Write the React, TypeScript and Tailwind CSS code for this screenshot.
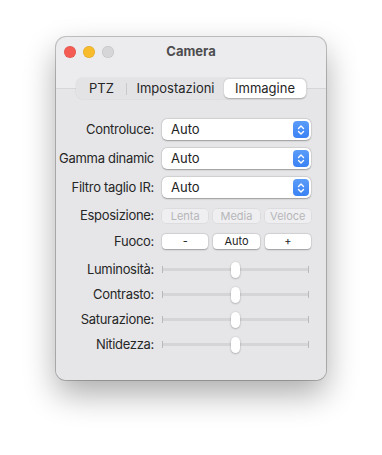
import React from "react";

const font = { fontFamily: "Inter, 'Liberation Sans', sans-serif" };

function Stepper() {
  return (
    <div className="w-[16px] h-[17px] rounded-[4px] bg-gradient-to-b from-[#5a9cf8] to-[#3a82f5] flex items-center justify-center">
      <svg width="8" height="12" viewBox="0 0 8 12" fill="none" stroke="white" strokeWidth="1.4" strokeLinecap="round" strokeLinejoin="round">
        <path d="M1.5 4.5 L4 2 L6.5 4.5" />
        <path d="M1.5 7.5 L4 10 L6.5 7.5" />
      </svg>
    </div>
  );
}

function Select({ value }: { value: string }) {
  return (
    <div className="h-[21px] w-full bg-white rounded-[5px] shadow-[0_0.5px_1.5px_rgba(0,0,0,0.3),0_0_0_0.5px_rgba(0,0,0,0.08)] flex items-center justify-between pl-[9px] pr-[2px]">
      <span className="text-[13px] text-[#222]">{value}</span>
      <Stepper />
    </div>
  );
}

function Row({ label, h, children, extra = "" }: { label: string; h: string; children: React.ReactNode; extra?: string }) {
  return (
    <div className={`flex items-center ${h} ${extra}`}>
      <div className="w-[98px] shrink-0 text-right text-[13px] tracking-[-0.3px] text-[#262626] whitespace-nowrap">{label}</div>
      <div className="ml-[8px] flex-1 flex items-center">{children}</div>
    </div>
  );
}

function Slider() {
  return (
    <div className="relative w-[147px] h-[18px] flex items-center">
      <div className="absolute left-0 right-0 h-[3px] bg-[#d5d5d8] rounded-full" />
      <div className="absolute left-0 w-[1px] h-[7px] bg-[#b9b9bc]" />
      <div className="absolute right-0 w-[1px] h-[7px] bg-[#b9b9bc]" />
      <div className="absolute left-[69px] w-[9px] h-[16px] bg-white rounded-full shadow-[0_0.5px_2px_rgba(0,0,0,0.35)]" />
    </div>
  );
}

function SmallBtn({ label, disabled }: { label: string; disabled?: boolean }) {
  return disabled ? (
    <div className="flex-1 h-[14px] rounded-[4px] bg-[#efeff1] shadow-[0_0_0_0.5px_rgba(0,0,0,0.07)] flex items-center justify-center text-[11px] text-[#b6b6b9]">
      {label}
    </div>
  ) : (
    <div className="flex-1 h-[15px] rounded-[4px] bg-white shadow-[0_0.5px_1.5px_rgba(0,0,0,0.3),0_0_0_0.5px_rgba(0,0,0,0.06)] flex items-center justify-center text-[11px] text-[#222]">
      {label}
    </div>
  );
}

export default function App() {
  return (
    <div className="w-[382px] h-[455px] bg-white pt-[37px] pl-[56px]" style={font}>
      <div className="w-[270px] h-[343px] rounded-[10px] bg-[#ececee] shadow-[0_14px_32px_rgba(0,0,0,0.33),0_0_0_1px_rgba(0,0,0,0.22)] overflow-hidden flex flex-col">
        {/* title bar */}
        <div className="relative h-[30px] flex items-center px-[8px] shrink-0">
          <div className="flex gap-[7px]">
            <div className="w-[12px] h-[12px] rounded-full bg-[#f45c53] shadow-[inset_0_0_0_0.5px_rgba(0,0,0,0.12)]" />
            <div className="w-[12px] h-[12px] rounded-full bg-[#f8bb2c] shadow-[inset_0_0_0_0.5px_rgba(0,0,0,0.12)]" />
            <div className="w-[12px] h-[12px] rounded-full bg-[#d6d6d8] shadow-[inset_0_0_0_0.5px_rgba(0,0,0,0.12)]" />
          </div>
          <div className="absolute inset-0 flex items-center justify-center pointer-events-none">
            <span className="text-[13px] font-bold text-[#4d4d4f]">Camera</span>
          </div>
        </div>
        {/* segmented control */}
        <div className="relative z-10 mt-[11px] ml-[20px] w-[231px] h-[21px] rounded-[6px] bg-[#e3e3e6] shadow-[0_0_0_0.5px_rgba(0,0,0,0.06)] flex items-center p-[1px] text-[13px] text-[#262626]">
          <div className="w-[49px] text-center">PTZ</div>
          <div className="w-[1px] h-[12px] bg-[#c9c9cc]" />
          <div className="w-[97px] text-center">Impostazioni</div>
          <div className="ml-auto w-[82px] h-[19px] rounded-[5px] bg-white shadow-[0_0.5px_1.5px_rgba(0,0,0,0.25)] flex items-center justify-center">
            Immagine
          </div>
        </div>
        {/* content box */}
        <div className="-mt-[11px] flex-1 border-t border-[#d6d6d9] bg-[#e6e6e9] pt-[26px] pr-[15px]">
          <Row label="Controluce:" h="h-[29px]"><Select value="Auto" /></Row>
          <Row label="Gamma dinamic" h="h-[29px]"><Select value="Auto" /></Row>
          <Row label="Filtro taglio IR:" h="h-[29px]"><Select value="Auto" /></Row>
          <Row label="Esposizione:" h="h-[28px]">
            <div className="flex w-full gap-[5px]">
              <SmallBtn label="Lenta" disabled />
              <SmallBtn label="Media" disabled />
              <SmallBtn label="Veloce" disabled />
            </div>
          </Row>
          <Row label="Fuoco:" h="h-[23px]">
            <div className="flex w-full gap-[5px]">
              <SmallBtn label="-" />
              <SmallBtn label="Auto" />
              <SmallBtn label="+" />
            </div>
          </Row>
          <Row label="Luminosità:" h="h-[25px]" extra="mt-[4px]"><Slider /></Row>
          <Row label="Contrasto:" h="h-[25px]"><Slider /></Row>
          <Row label="Saturazione:" h="h-[25px]"><Slider /></Row>
          <Row label="Nitidezza:" h="h-[25px]"><Slider /></Row>
        </div>
      </div>
    </div>
  );
}
